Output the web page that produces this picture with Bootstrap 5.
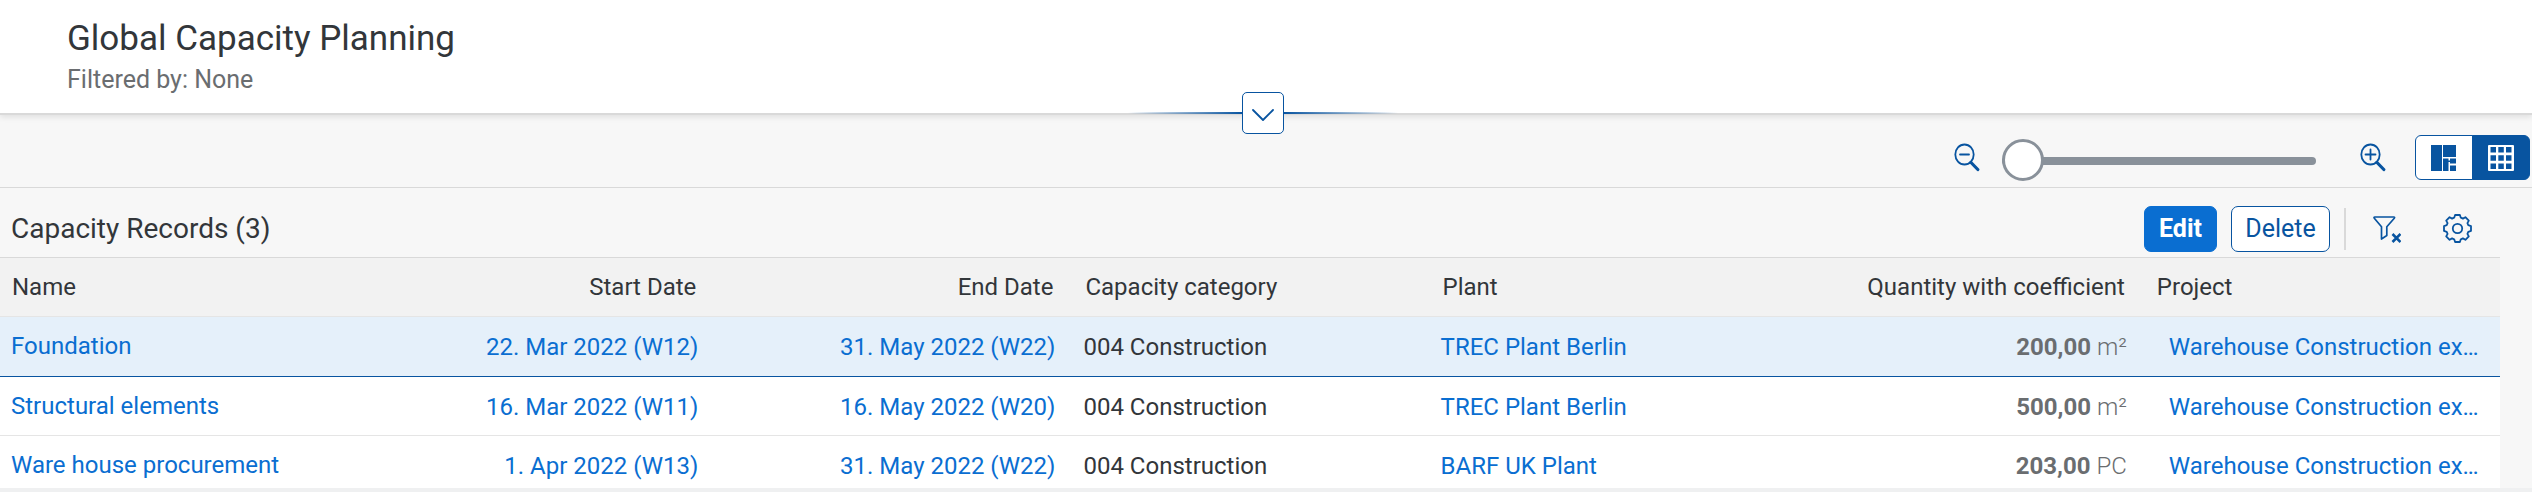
<!DOCTYPE html>
<html lang="en">
<head>
<meta charset="utf-8">
<meta name="viewport" content="width=device-width, initial-scale=1">
<title>Global Capacity Planning</title>
<link rel="stylesheet" href="https://cdn.jsdelivr.net/npm/bootstrap@5.3.0/dist/css/bootstrap.min.css">
<style>
  :root { --ink: #32363a; --muted: #6a6d70; --link: #0a6ed1; --blue: #0854a0; --line: #d9d9d9; }
  body { background: #f7f7f7; color: var(--ink); font-family: Roboto, "Liberation Sans", sans-serif; font-size: 24px; line-height: 32px; }
  svg { display: block; }
  .page-head { background: #fff; padding: 15px 67px 16px; border-bottom: 2px solid var(--line); box-shadow: 0 2px 6px rgba(0,0,0,.1); position: relative; }
  .page-head h1 { font-size: 35px; line-height: 48px; font-weight: 400; margin: 0; }
  .page-head p { color: var(--muted); font-size: 25px; line-height: 34px; margin: 0; }
  .expander { position: absolute; left: 0; right: 6px; bottom: -21px; display: flex; align-items: center; justify-content: center; pointer-events: none; }
  .expander::before, .expander::after { content: ""; width: 114px; height: 2px; background: linear-gradient(90deg, transparent, var(--blue)); }
  .expander::after { transform: scaleX(-1); }
  .expander button { width: 42px; height: 42px; padding: 0; border: 1px solid var(--blue); border-radius: 5px; background: #fff; color: var(--blue); pointer-events: auto; }
  .view-bar { height: 73px; padding: 13px 2px 0 0; border-bottom: 1px solid var(--line); }
  .icon-btn { color: var(--blue); padding: 0; border: 0; background: none; }
  .zoom-range { width: 314px; height: 42px; margin: 7px 44px 0 22px; appearance: none; -webkit-appearance: none; background: none; }
  .zoom-range::-webkit-slider-runnable-track { height: 8px; border-radius: 4px; background: #89919a; }
  .zoom-range::-webkit-slider-thumb { -webkit-appearance: none; width: 42px; height: 42px; margin-top: -18px; border: 3px solid #89919a; border-radius: 50%; background: #fff; }
  .view-switch { margin-left: 29px; }
  .view-switch .btn { width: 58px; height: 45px; padding: 0; color: var(--blue); background: #fff; border: 1px solid var(--blue); border-radius: 6px; }
  .view-switch .btn.active { color: #fff; background: var(--blue); border-color: var(--blue); }
  .records { padding-right: 32px; }
  .records-bar { height: 69px; padding: 12px 28px 0 11px; }
  .records-bar h2 { font-size: 28px; line-height: 34px; font-weight: 400; margin: 0 auto 0 0; }
  .records-bar .btn { height: 46px; padding: 0 13px; font-size: 25px; line-height: 32px; border-radius: 7px; }
  .records-bar .btn-edit { min-width: 73px; }
  .records-bar .btn-del { min-width: 99px; margin-left: 14px; }
  .btn-edit, .btn-edit:hover { background: var(--link); color: #fff; font-weight: 700; border: 1px solid var(--link); }
  .btn-del, .btn-del:hover { background: #fff; color: var(--blue); border: 1px solid var(--blue); }
  .bar-sep { width: 2px; height: 42px; margin: 0 27px 0 14px; background: var(--line); }
  .records-bar .icon-btn + .icon-btn { margin-left: 42px; }
  .grid-table { table-layout: fixed; margin: 0; --bs-table-bg: #fff; border-top: 1px solid var(--line); color: var(--ink); }
  .grid-table > :not(caption) > * > * { padding: 14px 16px 12px 12px; border-bottom: 1px solid #e5e5e5; white-space: nowrap; overflow: hidden; text-overflow: ellipsis; color: var(--ink); }
  .grid-table > thead > tr > th { padding: 13px 18px 13px 14px; background: #f2f2f2; font-weight: 400; }
  .grid-table > thead > tr > th:first-child { padding-left: 12px; }
  .grid-table > tbody > tr > td:first-child { padding: 13px 12px 13px 11px; }
  .grid-table > tbody > tr > td { height: 59px; }
  .grid-table > tbody > tr.picked > td { background: #e5f0fa; border-bottom-color: var(--blue); height: 60px; }
  .grid-table > tbody > tr:last-child > td { border-bottom: 0; padding-bottom: 6px; height: 52px; }
  .grid-table > tbody > tr > td:last-child { padding-right: 8px; padding-left: 26px; }
  .grid-table a { color: var(--link); text-decoration: none; }
  .grid-table .qty { color: var(--muted); }
  .qty .unit { font-weight: 300; }
  .foot-band { height: 4px; background: #eff0f1; }
</style>
</head>
<body>
<header class="page-head">
  <h1>Global Capacity Planning</h1>
  <p>Filtered by: None</p>
  <div class="expander">
    <button type="button" class="d-flex align-items-center justify-content-center" aria-label="Expand header">
      <svg width="24" height="14" viewBox="0 0 24 14" class="mt-1" fill="none" stroke="currentColor" stroke-width="1.8" stroke-linecap="round" stroke-linejoin="round"><path d="M2 2l10 10L22 2"/></svg>
    </button>
  </div>
</header>
<main>
  <div class="view-bar d-flex align-items-center justify-content-end">
    <button type="button" class="icon-btn" aria-label="Zoom out">
      <svg width="26" height="29" viewBox="0 0 26 29" fill="none" stroke="currentColor" stroke-width="1.8" stroke-linecap="round"><ellipse cx="10.500" cy="11.500" rx="9.200" ry="10"/><path d="M6 11.500h9"/><path d="M17 19.500l6.800 7" stroke-width="3.200"/></svg>
    </button>
    <input type="range" class="zoom-range" min="0" max="10" value="0" aria-label="Zoom level">
    <button type="button" class="icon-btn" aria-label="Zoom in">
      <svg width="26" height="29" viewBox="0 0 26 29" fill="none" stroke="currentColor" stroke-width="1.8" stroke-linecap="round"><ellipse cx="10.500" cy="11.500" rx="9.200" ry="10"/><path d="M5.500 11.500h10M10.500 6.500v10"/><path d="M17 19.500l6.800 7" stroke-width="3.200"/></svg>
    </button>
    <div class="btn-group view-switch" role="group" aria-label="View">
      <button type="button" class="btn d-flex align-items-center justify-content-center" aria-label="Chart view">
        <svg width="26" height="26" viewBox="0 0 26 26" fill="currentColor"><path d="M0 0h11v26H0zM12 0h13v12H12zM12 13.500h5.500V26H12zM19 13.500h6v5h-6zM19 20.500h6V26h-6zM17.500 15.500H19v1.500h-1.500z"/></svg>
      </button>
      <button type="button" class="btn active d-flex align-items-center justify-content-center" aria-label="Table view" aria-pressed="true">
        <svg width="26" height="26" viewBox="0 0 26 26" fill="currentColor" fill-rule="evenodd"><path d="M1 0h24a1 1 0 0 1 1 1v24a1 1 0 0 1-1 1H1a1 1 0 0 1-1-1V1a1 1 0 0 1 1-1zM2.500 2v5.500H8V2zM10.300 2v5.500h5.500V2zM18 2v5.500h5.500V2zM2.500 10.300v5.500H8v-5.500zM10.300 10.300v5.500h5.500v-5.500zM18 10.300v5.500h5.500v-5.500zM2.500 18.500V24H8v-5.500zM10.300 18.500V24h5.500v-5.500zM18 18.500V24h5.500v-5.500z"/></svg>
      </button>
    </div>
  </div>
  <section class="records">
    <div class="records-bar d-flex align-items-center">
      <h2>Capacity Records (3)</h2>
      <button type="button" class="btn btn-edit">Edit</button>
      <button type="button" class="btn btn-del">Delete</button>
      <span class="bar-sep"></span>
      <button type="button" class="icon-btn" aria-label="Clear filter">
        <svg width="28" height="28" viewBox="0 0 28 28" fill="none" stroke="currentColor" stroke-width="1.700" stroke-linejoin="round"><path d="M1.800 2h19c.8 0 1 .6.500 1.200l-7.500 8.600v8.700L8.500 24V11.800L1.300 3.200C.8 2.600 1 2 1.800 2z"/><path d="M19.500 19l8 8m0-8l-8 8" stroke-width="2.600"/></svg>
      </button>
      <button type="button" class="icon-btn" aria-label="Settings">
        <svg width="29" height="29" viewBox="-14.500 -14.500 29 29" fill="none" stroke="currentColor" stroke-width="1.800" stroke-linejoin="round"><circle r="4.700"/><path d="M-2.400-13.500H2.400L3.300-10.800Q4.500-10.400 5.400-9.900L7.900-11.300 11.300-7.900 9.900-5.400Q10.400-4.500 10.800-3.300L13.500-2.400V2.400L10.800 3.300Q10.400 4.500 9.900 5.400L11.300 7.900 7.900 11.300 5.400 9.900Q4.500 10.400 3.300 10.800L2.400 13.500H-2.400L-3.300 10.800Q-4.500 10.400-5.400 9.900L-7.900 11.300-11.300 7.900-9.900 5.400Q-10.400 4.500-10.800 3.300L-13.500 2.400V-2.400L-10.800-3.300Q-10.400-4.500-9.900-5.400L-11.300-7.900-7.900-11.300-5.400-9.900Q-4.500-10.400-3.300-10.800Z"/></svg>
      </button>
    </div>
    <table class="table grid-table">
      <thead>
        <tr><th scope="col">Name</th><th scope="col" class="text-end">Start Date</th><th scope="col" class="text-end">End Date</th><th scope="col">Capacity category</th><th scope="col">Plant</th><th scope="col" class="text-end">Quantity with coefficient</th><th scope="col">Project</th></tr>
      </thead>
      <tbody>
        <tr class="picked"><td><a href="#">Foundation</a></td><td class="text-end"><a href="#">22. Mar 2022 (W12)</a></td><td class="text-end"><a href="#">31. May 2022 (W22)</a></td><td>004 Construction</td><td><a href="#">TREC Plant Berlin</a></td><td class="text-end qty"><b>200,00</b> <span class="unit">m²</span></td><td><a href="#">Warehouse Construction ex…</a></td></tr>
        <tr><td><a href="#">Structural elements</a></td><td class="text-end"><a href="#">16. Mar 2022 (W11)</a></td><td class="text-end"><a href="#">16. May 2022 (W20)</a></td><td>004 Construction</td><td><a href="#">TREC Plant Berlin</a></td><td class="text-end qty"><b>500,00</b> <span class="unit">m²</span></td><td><a href="#">Warehouse Construction ex…</a></td></tr>
        <tr><td><a href="#">Ware house procurement</a></td><td class="text-end"><a href="#">1. Apr 2022 (W13)</a></td><td class="text-end"><a href="#">31. May 2022 (W22)</a></td><td>004 Construction</td><td><a href="#">BARF UK Plant</a></td><td class="text-end qty"><b>203,00</b> <span class="unit">PC</span></td><td><a href="#">Warehouse Construction ex…</a></td></tr>
      </tbody>
    </table>
  </section>
  <div class="foot-band"></div>
</main>
<script src="https://cdn.jsdelivr.net/npm/bootstrap@5.3.0/dist/js/bootstrap.bundle.min.js"></script>
</body>
</html>
